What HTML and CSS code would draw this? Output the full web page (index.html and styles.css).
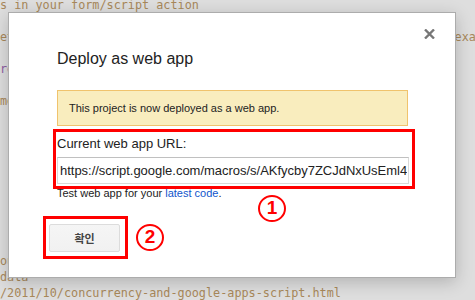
FILE: index.html
```html
<!DOCTYPE html>
<html lang="ko">
<head>
    <meta charset="UTF-8">
    <title>Deploy as web app</title>
    <link rel="stylesheet" href="styles.css">
</head>
<body>
<pre class="code">s in your form/script action

etTitle('Web App')                                              exa

<span class="kw">return</span> HtmlService.createHtmlOutput(output);

message = 'Thanks';









output.append(data);
data
/2011/10/concurrency-and-google-apps-script.html</pre>

    <div class="dialog">
        <button class="close" title="Close">
            <svg width="11" height="10" viewBox="0 0 11 10">
                <path d="M1 0.5 L10 9.5 M10 0.5 L1 9.5" stroke="#777" stroke-width="2.4" fill="none"/>
            </svg>
        </button>

        <h2 class="title">Deploy as web app</h2>

        <div class="notice">This project is now deployed as a web app.</div>

        <div class="url-field mark">
            <label for="app-url">Current web app URL:</label>
            <input id="app-url" class="url-input" type="text" readonly
                   value="https://script.google.com/macros/s/AKfycby7ZCJdNxUsEml4lQeR2/exec">
        </div>
        <p class="hint">Test web app for your <a href="#">latest code</a>.</p>
        <span class="step step-one">1</span>

        <div class="actions">
            <div class="mark mark-btn">
                <button class="btn">확인</button>
            </div>
            <span class="step">2</span>
        </div>
    </div>
</body>
</html>
```

FILE: styles.css
```css
body {
    margin: 0;
    height: 300px;
    overflow: hidden;
    position: relative;
    background: #dedede;
    font-family: Arial, "Liberation Sans", sans-serif;
}
.code {
    margin: -3px 0 0;
    overflow: hidden;
    font-family: "DejaVu Sans Mono", monospace;
    font-size: 11.8px;
    line-height: 16px;
    color: #a8885a;
}
.kw { color: #8f5ea3; }

.dialog {
    position: absolute;
    left: 8px;
    top: 12px;
    width: 448px;
    height: 266px;
    box-sizing: border-box;
    background: #fff;
    border: 1px solid #acacac;
    box-shadow: 0 4px 16px rgba(0, 0, 0, 0.2);
    padding: 36px 47px 0 48px;
    color: #222;
}
.close {
    position: absolute;
    top: 16px;
    right: 20px;
    padding: 0;
    border: none;
    background: none;
    line-height: 0;
}
.title {
    margin: 0 0 21px;
    font-size: 16px;
    line-height: 20px;
    font-weight: normal;
    color: #222;
}
.notice {
    font-size: 11px;
    line-height: 14px;
    padding: 10px 11px;
    background: #f9edbe;
    border: 1px solid #f0c36d;
    margin-bottom: 3px;
}
.mark { border: 3px solid #f00; }
.url-field {
    width: 362px;
    box-sizing: border-box;
    margin: 0 0 -2px -4px;
    padding: 4px 3px 2px 1px;
}
.url-field label {
    display: block;
    font-size: 13px;
    line-height: 16px;
    margin-bottom: 5px;
}
.url-input {
    display: block;
    width: 352px;
    height: 27px;
    box-sizing: border-box;
    border: 1px solid #d9d9d9;
    border-top-color: #c0c0c0;
    padding: 0 1px 0 2px;
    font-family: Arial, "Liberation Sans", sans-serif;
    font-size: 13px;
    letter-spacing: -0.02px;
    color: #222;
    outline: none;
}
.hint {
    margin: 0;
    font-size: 11px;
    line-height: 13px;
}
.hint a { color: #15c; text-decoration: none; }

.actions {
    display: flex;
    align-items: center;
    gap: 8px;
    margin: 16px 0 0 -14px;
}
.mark-btn { padding: 5px 5px 4px 3px; }
.btn {
    display: block;
    width: 71px;
    height: 28px;
    padding: 0;
    background: linear-gradient(#f5f5f5, #f1f1f1);
    border: 1px solid #dcdcdc;
    border-radius: 2px;
    font-family: "Noto Sans CJK KR", sans-serif;
    font-size: 11px;
    font-weight: bold;
    color: #444;
}
.step {
    width: 28px;
    height: 27px;
    box-sizing: border-box;
    border: 2.5px solid #f00;
    border-radius: 50%;
    color: #f00;
    font-size: 19px;
    font-weight: bold;
    line-height: 22px;
    text-align: center;
}
.step-one {
    position: absolute;
    left: 249px;
    top: 182px;
}
```
